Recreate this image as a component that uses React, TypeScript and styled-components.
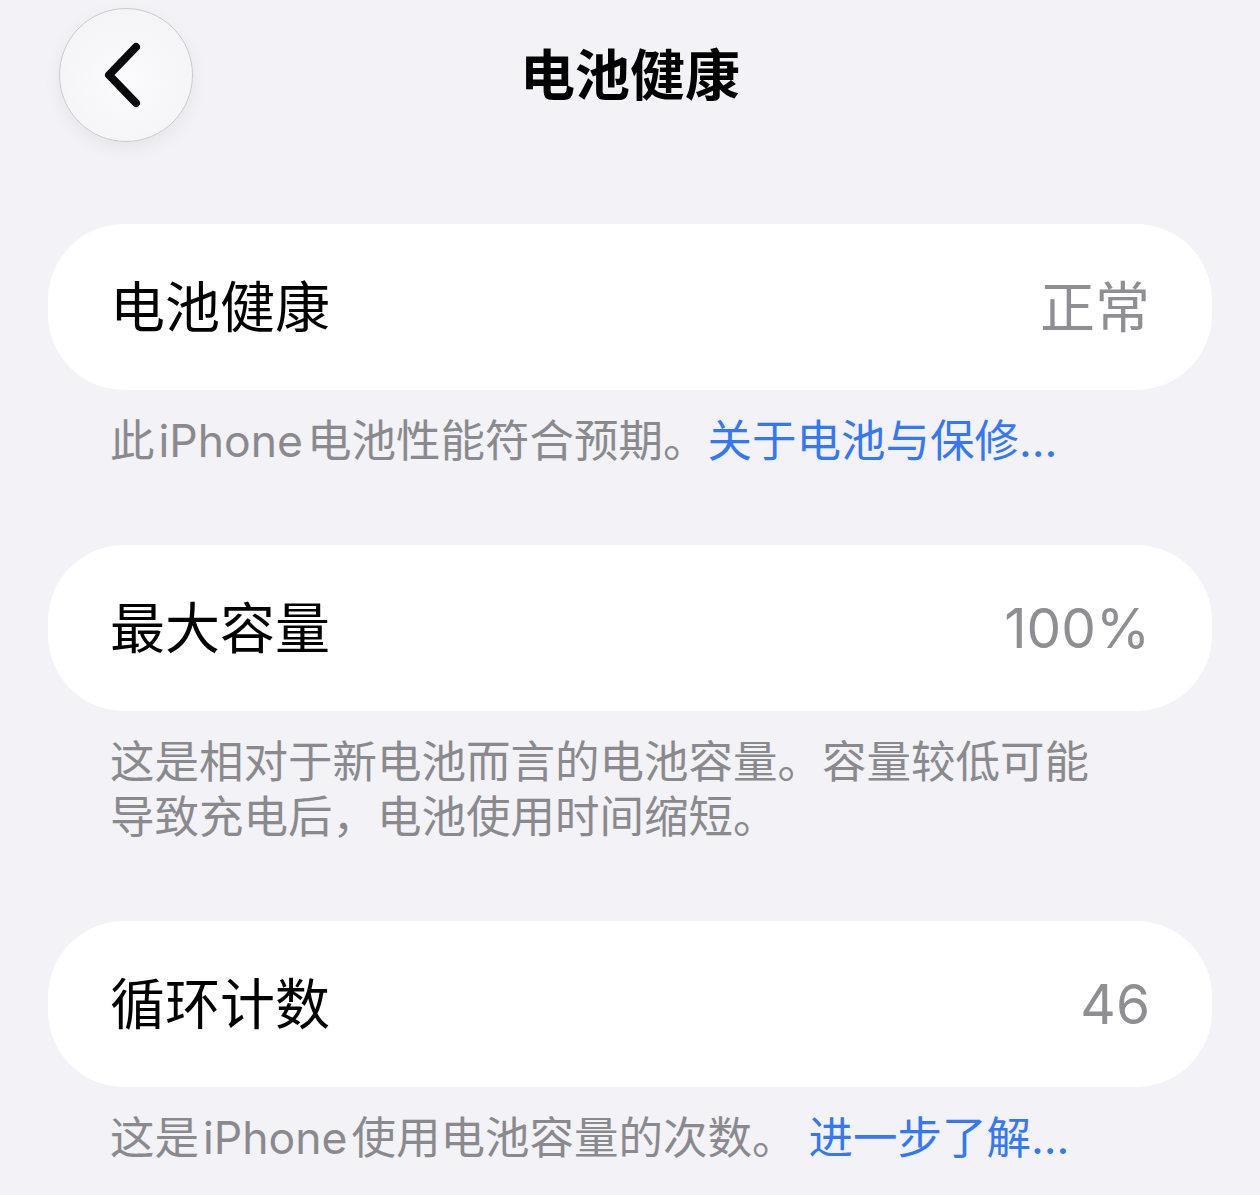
import React from "react";
import styled, { createGlobalStyle } from "styled-components";

const Global = createGlobalStyle`
  html, body {
    margin: 0;
    padding: 0;
    background: #f2f2f7;
  }
  body {
    font-family: Inter, "Noto Sans CJK SC", sans-serif;
    -webkit-font-smoothing: antialiased;
  }
`;

const Page = styled.div`
  width: 1260px;
  min-height: 1195px;
  background: #f2f2f7;
  box-sizing: border-box;
  padding-top: 8px;
`;

const Header = styled.header`
  display: grid;
  grid-template-columns: 1fr auto 1fr;
  align-items: center;
  height: 134px;
  padding: 0 59px;
  margin-bottom: 82px;
`;

const BackButton = styled.button`
  width: 134px;
  height: 134px;
  border-radius: 50%;
  border: 1.5px solid #cacace;
  background: radial-gradient(circle at 50% 55%, #fbfbfd 0%, #f5f5f8 70%, #f0f0f4 100%);
  box-shadow: 0 6px 18px rgba(0, 0, 0, 0.06);
  display: flex;
  align-items: center;
  justify-content: center;
  padding: 0 6px 0 0;
  box-sizing: border-box;
  justify-self: start;
  cursor: pointer;
`;

const Title = styled.h1`
  margin: 0;
  font-size: 55px;
  font-weight: 700;
  color: #000;
  letter-spacing: 0;
  line-height: 1;
`;

const List = styled.main`
  padding: 0 48px;
  display: flex;
  flex-direction: column;
  gap: 76px;
`;

const Section = styled.section`
  display: flex;
  flex-direction: column;
`;

const Card = styled.div`
  height: 166px;
  background: #fff;
  border-radius: 76px;
  display: flex;
  align-items: center;
  justify-content: space-between;
  padding: 0 62px 0 62px;
  box-sizing: border-box;
`;

const Label = styled.span`
  font-size: 55px;
  color: #000;
  line-height: 1;
`;

const Value = styled.span`
  font-size: 55px;
  color: #8e8e93;
  line-height: 1;
`;

const Footer = styled.p`
  margin: 0;
  padding: 24px 0 0 62px;
  max-width: 1000px;
  font-size: 44.5px;
  line-height: 55px;
  color: #8a8a8e;
`;

const Link = styled.span<{ $gap?: boolean }>`
  color: #3478f6;
  margin-left: ${(p) => (p.$gap ? "12px" : "0")};
`;

const Latin = styled.span`
  margin: 0 4px;
`;

const Chevron = () => (
  <svg width="46" height="66" viewBox="0 0 46 66" fill="none">
    <path
      d="M36 5 L9 33 L36 61"
      stroke="#0a0a0a"
      strokeWidth="8"
      strokeLinecap="round"
      strokeLinejoin="round"
    />
  </svg>
);

export default function App() {
  return (
    <Page>
      <Global />
      <Header>
        <BackButton aria-label="返回">
          <Chevron />
        </BackButton>
        <Title>电池健康</Title>
        <div />
      </Header>
      <List>
        <Section>
          <Card>
            <Label>电池健康</Label>
            <Value>正常</Value>
          </Card>
          <Footer>
            此<Latin>iPhone</Latin>电池性能符合预期。<Link>关于电池与保修...</Link>
          </Footer>
        </Section>
        <Section>
          <Card>
            <Label>最大容量</Label>
            <Value>100%</Value>
          </Card>
          <Footer>
            这是相对于新电池而言的电池容量。容量较低可能导致充电后，电池使用时间缩短。
          </Footer>
        </Section>
        <Section>
          <Card>
            <Label>循环计数</Label>
            <Value>46</Value>
          </Card>
          <Footer>
            这是<Latin>iPhone</Latin>使用电池容量的次数。<Link $gap>进一步了解...</Link>
          </Footer>
        </Section>
      </List>
    </Page>
  );
}
